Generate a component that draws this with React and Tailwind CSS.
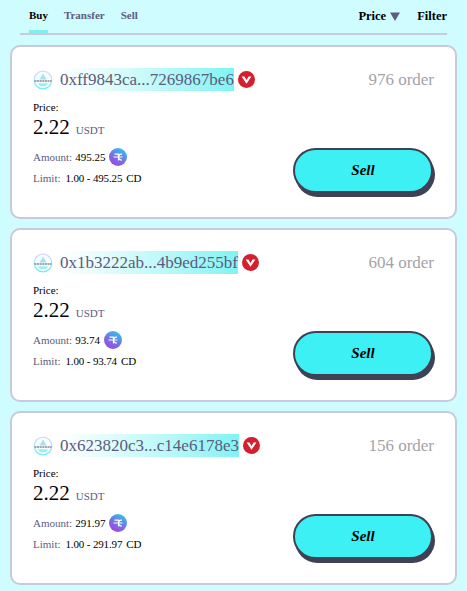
const orders = [
  { address: "0xff9843ca...7269867be6", count: 976, amount: "495.25" },
  { address: "0x1b3222ab...4b9ed255bf", count: 604, amount: "93.74" },
  { address: "0x623820c3...c14e6178e3", count: 156, amount: "291.97" },
];

function MerchantLogo() {
  return (
    <svg width="20" height="20" viewBox="0 0 20 20" className="shrink-0">
      <defs>
        <linearGradient id="ring" x1="0" y1="0" x2="0" y2="1">
          <stop offset="0" stopColor="#ddd6fb" />
          <stop offset="1" stopColor="#6eeef2" />
        </linearGradient>
      </defs>
      <circle cx="10" cy="10" r="8.8" fill="#f6fdfe" stroke="url(#ring)" strokeWidth="1.2" />
      <path d="M10 3.5 L13.5 9.5 H6.5 Z" fill="#a8e0ee" />
      <path d="M1.5 11 H18.5" stroke="#4a4e5c" strokeWidth="1.2" strokeDasharray="2 0.6" />
      <path d="M5 13.2 H15 L12.8 16.2 H7.2 Z" fill="#9af0f2" />
    </svg>
  );
}

function RedBadge() {
  return (
    <svg width="17" height="17" viewBox="0 0 17 17" className="shrink-0">
      <circle cx="8.5" cy="8.5" r="8.5" fill="#d4202c" />
      <path d="M3.6 5.6 H6.4 L8.5 9 L10.6 5.6 H13.4 L8.5 12.8 Z" fill="#fff" />
    </svg>
  );
}

function CoinIcon() {
  return (
    <svg width="18" height="18" viewBox="0 0 18 18" className="shrink-0">
      <defs>
        <linearGradient id="coin" x1="0.8" y1="0" x2="0.2" y2="1">
          <stop offset="0" stopColor="#2fc8ee" />
          <stop offset="0.5" stopColor="#6f78e2" />
          <stop offset="1" stopColor="#a93ee0" />
        </linearGradient>
      </defs>
      <circle cx="9" cy="9" r="9" fill="url(#coin)" />
      <path d="M5.5 6.2 H9.5 V12.5 M4.6 9 H13.4 M13 6.2 A3.2 3.2 0 0 0 9.5 9 A3.2 3.2 0 0 0 13 12" fill="none" stroke="#fff" strokeWidth="1.2" />
    </svg>
  );
}

function OrderCard({ address, count, amount }) {
  return (
    <div className="flex h-[174px] flex-col rounded-[10px] border-2 border-[#c8cadb] bg-white pl-[21px] pr-[21px] pt-[21px]">
      <div className="flex items-center">
        <MerchantLogo />
        <span className="ml-[7px] flex h-[23px] items-center bg-gradient-to-r from-white to-[#7ff3f3] text-[17px] leading-none text-[#5c5b80]">
          {address}
        </span>
        <span className="ml-[4px]"><RedBadge /></span>
        <span className="ml-auto text-[17px] leading-none text-[#a3a3a8]">{count} order</span>
      </div>
      <div className="flex flex-1 justify-between">
        <div>
          <div className="mt-[9px] text-[11px] leading-[14px] text-black">Price:</div>
          <div className="mt-[1px] flex items-baseline text-black">
            <span className="text-[21px] leading-[24px]">2.22</span>
            <span className="ml-[6px] text-[11px] text-[#5c5b80]">USDT</span>
          </div>
          <div className="mt-[8px] flex h-[20px] items-center text-[11px]">
            <span className="text-[#5c5b80]">Amount:</span>
            <span className="ml-[3px] text-black">{amount}</span>
            <span className="ml-[4px]"><CoinIcon /></span>
          </div>
          <div className="mt-[1px] flex h-[20px] items-center text-[11px]">
            <span className="text-[#5c5b80]">Limit:</span>
            <span className="ml-[5px] tracking-[-0.15px] text-black">1.00 - {amount}</span>
            <span className="ml-[4px] text-black">CD</span>
          </div>
        </div>
        <button className="mr-[1px] mt-[57px] flex h-[45px] w-[140px] items-center justify-center rounded-[23px] border-2 border-[#3f4154] bg-[#3cf0f3] text-[15px] font-bold italic text-black shadow-[2px_4px_0_#3f4154]">
          Sell
        </button>
      </div>
    </div>
  );
}

export default function App() {
  return (
    <div className="min-h-[591px] bg-[#cffcff] px-[10px] font-['Liberation_Serif',serif]">
      <div className="mx-[10px] flex h-[35px] items-start justify-between border-b-2 border-[#c8cadb] text-[11px] font-bold">
        <div className="flex pl-[9px]">
          <div className="h-[33px] border-b-[3px] border-[#7eeef0] pt-[7px] text-black">Buy</div>
          <div className="ml-[16px] pt-[7px] text-[#5c5b80]">Transfer</div>
          <div className="ml-[16px] pt-[7px] text-[#5c5b80]">Sell</div>
        </div>
        <div className="flex items-center pt-[7px] text-[12.5px] text-black">
          <span>Price</span>
          <svg width="10" height="9" viewBox="0 0 10 9" className="ml-[4px]">
            <path d="M0 0.5 H10 L5 9 Z" fill="#5c5b80" />
          </svg>
          <span className="ml-[17px]">Filter</span>
        </div>
      </div>
      <div className="mt-[10px] flex flex-col gap-[9px]">
        {orders.map((o) => (
          <OrderCard key={o.address} {...o} />
        ))}
      </div>
    </div>
  );
}
